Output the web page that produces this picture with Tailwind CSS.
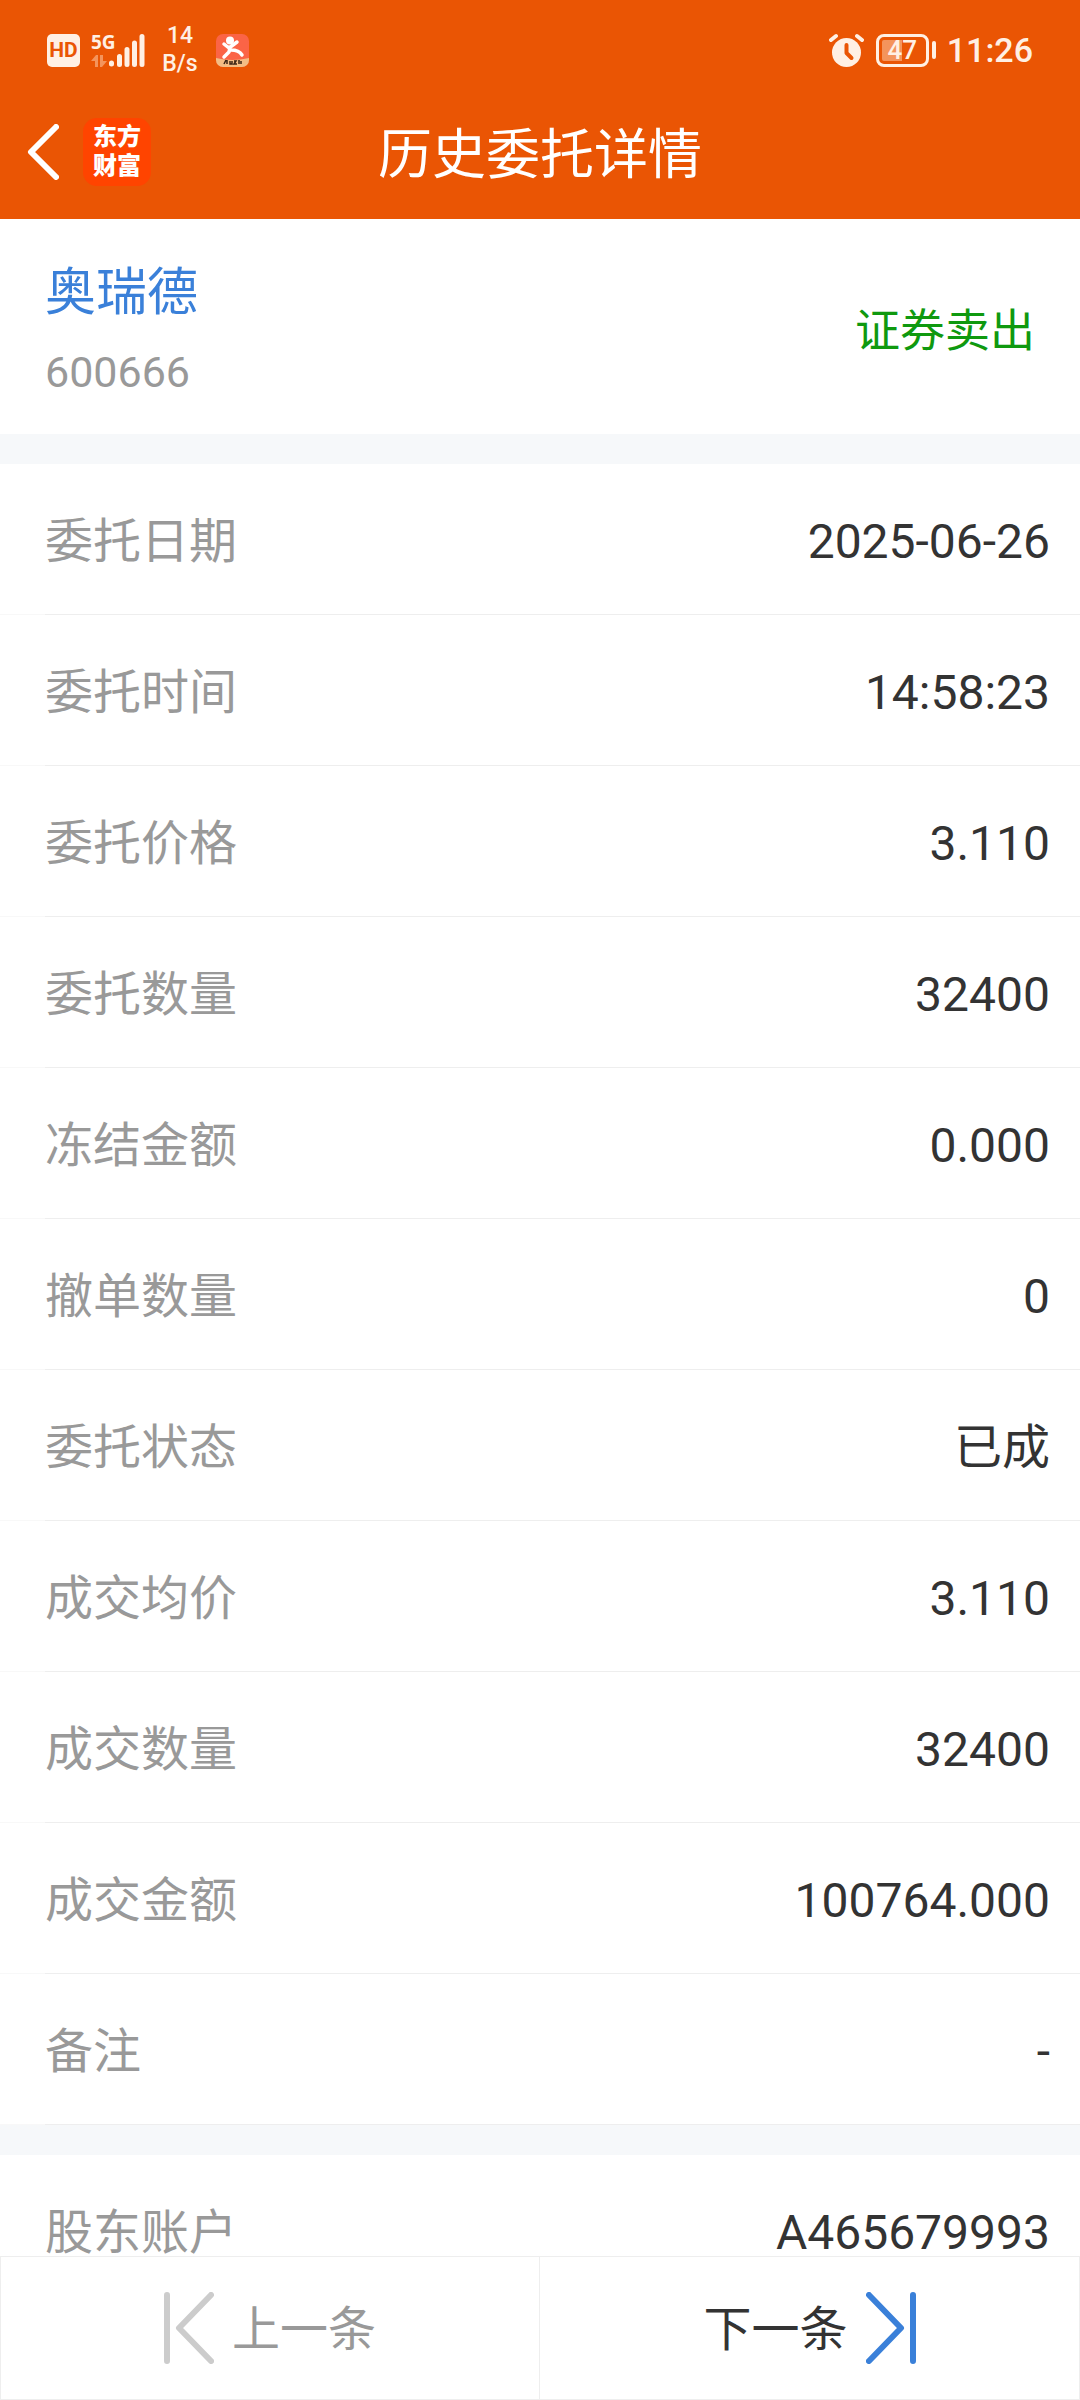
<!DOCTYPE html>
<html lang="zh-CN">
<head>
    <meta charset="UTF-8">
    <meta name="viewport" content="width=device-width, initial-scale=1.0">
    <title>历史委托详情</title>
    <script src="https://cdn.jsdelivr.net/npm/@tailwindcss/browser@4"></script>
</head>
<body class="flex h-screen flex-col overflow-hidden bg-white font-[Roboto,'Noto_Sans_CJK_SC',sans-serif] text-[48px] text-[#333333]">

    <header class="bg-[#ea5504] pb-[15px] text-white">
        <!-- Status bar -->
        <div class="flex h-[100px] items-center justify-between pl-[47px] pr-[47px] text-[#fff0e4]">
            <div class="flex items-center">
                <span class="flex h-[33px] w-[33px] items-center justify-center rounded-[5px] bg-[#fff0e4] text-[21px] font-bold leading-none text-[#ea5504]">HD</span>
                <div class="ml-[11px] flex h-[33px] w-[54px]">
                    <div class="flex w-[18px] flex-col justify-between">
                        <span class="font-['Liberation_Sans_Narrow','Open_Sans',sans-serif] text-[19px] font-bold leading-[16px]">5G</span>
                        <svg class="h-[12px] w-[16px]" viewBox="0 0 16 12" fill="#f4945c">
                            <path d="M0 6 5 0h2v12H4V6zM9 0h3v6h4l-5 6H9z"/>
                        </svg>
                    </div>
                    <svg class="h-[33px] w-[36px]" viewBox="0 0 36 33" stroke="#fff0e4" stroke-width="5" stroke-linecap="round">
                        <path d="M2.500 29v1M10.500 22.500v8M18 15.500v15M25.500 9v21.500M33 2.500v28"/>
                    </svg>
                </div>
                <div class="ml-[16px] w-[38px] text-center text-[23px] font-medium leading-[28px]">14<br>B/s</div>
                <svg class="ml-[17px] h-[33px] w-[33px]" viewBox="0 0 33 33">
                    <defs>
                        <clipPath id="app"><rect width="33" height="33" rx="7"/></clipPath>
                    </defs>
                    <g clip-path="url(#app)">
                        <path fill="#fb6446" d="M0 0h33v33H0z"/>
                        <path fill="#f3bd84" d="M0 24q16 4 33 0v9H0z"/>
                        <circle cx="14" cy="6.500" r="4" fill="#fff"/>
                        <path d="M8 10l5 4 8-6M14 13l-1 5-5 5M15 16q8 0 11 5" fill="none" stroke="#fff" stroke-width="3.500" stroke-linecap="round" stroke-linejoin="round"/>
                        <path d="M8 30l2-4M11 30v-4M14 27v3h2v-3M18 27h2l-2 3h3M23 26v4M25 27v3" fill="none" stroke="#3b2414" stroke-width="1.500"/>
                    </g>
                </svg>
            </div>
            <div class="flex items-center">
                <svg class="h-[35px] w-[35px]" viewBox="0 0 35 35" fill="none" stroke-linecap="round" stroke-linejoin="round">
                    <circle cx="17.500" cy="19.500" r="14.500" fill="#fff0e4"/>
                    <path d="M2 7l5-4M33 7l-5-4" stroke="#fff0e4" stroke-width="4"/>
                    <path d="M17.500 12v8l5 5" stroke="#ea5504" stroke-width="4"/>
                </svg>
                <div class="ml-[12px] flex items-center gap-[3px]">
                    <div class="flex h-[33px] w-[53px] items-center justify-center rounded-[8px] border-3 border-[#fff0e4] bg-linear-to-r from-[#f4945c] from-50% to-[#ea5504] to-50% bg-clip-content p-[3px] text-[26px] font-medium leading-none">47</div>
                    <span class="h-[18px] w-[4px] rounded-sm bg-[#fff0e4]"></span>
                </div>
                <span class="ml-[11px] text-[34px] font-medium leading-none">11:26</span>
            </div>
        </div>

        <!-- Title bar -->
        <div class="grid h-[104px] grid-cols-[1fr_auto_1fr] items-center">
            <div class="flex items-center gap-[24px] pl-[27px]">
                <button type="button" aria-label="返回">
                    <svg class="h-[56px] w-[32px]" viewBox="0 0 32 56" fill="none" stroke="#fff" stroke-width="6" stroke-linecap="round" stroke-linejoin="round">
                        <path d="M29 3 4 28l25 25"/>
                    </svg>
                </button>
                <span class="flex h-[68px] w-[68px] items-center justify-center rounded-[14px] bg-[#ff4400] text-[24px] font-black leading-[29px]">东方<br>财富</span>
            </div>
            <h1 class="pt-[8px] text-[54px] leading-[72px]">历史委托详情</h1>
        </div>
    </header>

    <main class="flex-1 overflow-y-auto [scrollbar-width:none]">
        <section class="flex items-center justify-between pt-[34px] pr-[45px] pb-[23px] pl-[45px]">
            <div>
                <h2 class="text-[51px] leading-[80px] text-[#3a80d9]">奥瑞德</h2>
                <p class="text-[43px] leading-[78px] text-[#999999]">600666</p>
            </div>
            <p class="text-[45px] leading-[80px] text-[#0f990f]">证券卖出</p>
        </section>

        <dl id="order" class="border-t-30 border-[#f6f8fa]"></dl>
        <dl id="account" class="border-t-30 border-[#f6f8fa]"></dl>
    </main>

    <!-- Prev / next order -->
    <nav class="grid h-[144px] shrink-0 grid-cols-2 bg-white">
        <button type="button" disabled class="flex items-center justify-center gap-[18px] border border-[#eeeeee] text-[#999999]">
            <svg class="h-[72px] w-[50px]" viewBox="0 0 50 72" fill="none" stroke="#cccccc" stroke-width="6" stroke-linecap="round" stroke-linejoin="round">
                <path d="M3 3v66M47 3 15 36l32 33"/>
            </svg>
            <span class="pt-[4px]">上一条</span>
        </button>
        <button type="button" class="flex items-center justify-center gap-[18px] border border-l-0 border-[#eeeeee]">
            <span class="pt-[4px]">下一条</span>
            <svg class="h-[72px] w-[50px]" viewBox="0 0 50 72" fill="none" stroke="#3a80d9" stroke-width="6" stroke-linecap="round" stroke-linejoin="round">
                <path d="M47 3v66M3 3l32 33L3 69"/>
            </svg>
        </button>
    </nav>

    <script>
        const orderRows = [
            ['委托日期', '2025-06-26'],
            ['委托时间', '14:58:23'],
            ['委托价格', '3.110'],
            ['委托数量', '32400'],
            ['冻结金额', '0.000'],
            ['撤单数量', '0'],
            ['委托状态', '已成'],
            ['成交均价', '3.110'],
            ['成交数量', '32400'],
            ['成交金额', '100764.000'],
            ['备注', '-']
        ];
        const accountRows = [
            ['股东账户', 'A465679993']
        ];

        // The divider is fainter under the left margin than under the text
        function renderRows(id, rows) {
            const list = document.getElementById(id);
            rows.forEach(([label, value]) => {
                const row = document.createElement('div');
                row.className = 'flex h-[151px] before:w-[45px] before:border-b before:border-[#f8f8f8]';
                row.innerHTML = `
                    <dt class="flex flex-1 items-center border-b border-[#eeeeee] pt-[5px] text-[#999999]">${label}</dt>
                    <dd class="flex items-center border-b border-[#eeeeee] pt-[5px] pr-[30px]">${value}</dd>`;
                list.appendChild(row);
            });
        }

        renderRows('order', orderRows);
        renderRows('account', accountRows);
    </script>
</body>
</html>
